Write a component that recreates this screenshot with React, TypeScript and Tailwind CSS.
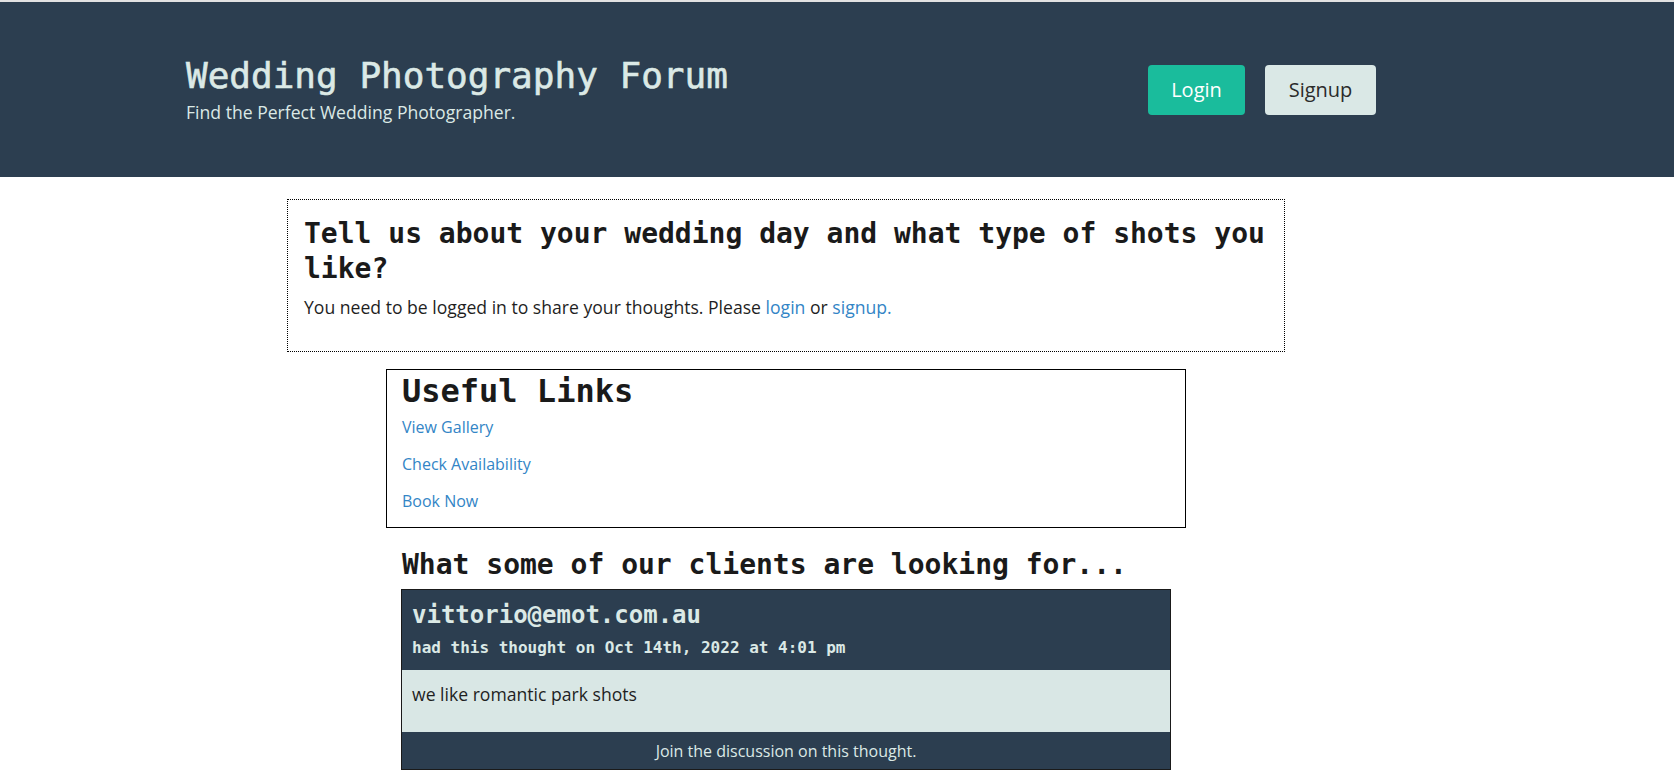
import React from "react";

const mono = "font-['DejaVu_Sans_Mono',monospace]";

export default function App() {
  return (
    <div className="min-h-[775px] bg-white font-['Open_Sans',sans-serif] text-[#1f1f1f]">
      <div className="h-[2px] bg-[#e2e2e2]" />
      <header className="h-[175px] bg-[#2c3e50] flex items-center">
        <div className="w-[1376px] pl-[186px] flex items-center justify-between">
          <div>
            <h1 className={`${mono} text-[36px] leading-[1.2] text-[#dbe9e6] [-webkit-text-stroke:0.6px_#dbe9e6]`}>
              Wedding Photography Forum
            </h1>
            <p className="mt-[1px] text-[17.6px] leading-[26px] text-[#dbe9e6]">
              Find the Perfect Wedding Photographer.
            </p>
          </div>
          <div className="flex items-center gap-[20px]">
            <button className="h-[50px] w-[97px] rounded-[4px] bg-[#1abc9c] text-white text-[20px]">
              Login
            </button>
            <button className="h-[50px] w-[111px] rounded-[4px] bg-[#dae8e6] text-[#2b2b2b] text-[20px]">
              Signup
            </button>
          </div>
        </div>
      </header>

      <main className="w-[1572px] flex flex-col items-center">
        <section className="mt-[22px] w-[998px] border border-dotted border-black px-[16px] pt-[16px] pb-[16px]">
          <h3 className={`${mono} font-bold text-[28px] leading-[35px] text-[#1a1a1a]`}>
            Tell us about your wedding day and what type of shots you like?
          </h3>
          <p className="mt-[8px] mb-[15px] text-[17.6px] leading-[26px]">
            You need to be logged in to share your thoughts. Please{" "}
            <a className="text-[#3385c6]" href="#">login</a> or{" "}
            <a className="text-[#3385c6]" href="#">signup.</a>
          </p>
        </section>

        <section className="mt-[17px] w-[800px] border border-black pl-[15px] pt-[2px] pb-[14px]">
          <h2 className={`${mono} font-bold text-[32px] leading-[1.2] text-[#1a1a1a]`}>
            Useful Links
          </h2>
          <div className="mt-[5px] flex flex-col gap-[13px] text-[16px] leading-[24px]">
            <a className="text-[#3385c6]" href="#">View Gallery</a>
            <a className="text-[#3385c6]" href="#">Check Availability</a>
            <a className="text-[#3385c6]" href="#">Book Now</a>
          </div>
        </section>

        <section className="mt-[19px] w-[770px]">
          <h3 className={`${mono} font-bold text-[28px] leading-[35px] text-[#1a1a1a] pl-[1px]`}>
            What some of our clients are looking for...
          </h3>
          <div className="mt-[7px] border border-[#1a1a1a]">
            <div className="bg-[#2c3e50] px-[10px] pt-[11px] pb-[10px] text-[#dbe9e6]">
              <div className={`${mono} font-bold text-[24px] leading-[1.2]`}>
                vittorio@emot.com.au
              </div>
              <div className={`${mono} font-bold text-[16px] leading-[24px] mt-[6px]`}>
                had this thought on Oct 14th, 2022 at 4:01 pm
              </div>
            </div>
            <div className="bg-[#d9e7e5] h-[62px] px-[10px] pt-[11px] text-[17.6px] leading-[26px]">
              we like romantic park shots
            </div>
            <div className="bg-[#2c3e50] pt-[7px] pb-[5px] text-center text-[16px] leading-[25px] text-[#dbe9e6]">
              Join the discussion on this thought.
            </div>
          </div>
        </section>
      </main>
    </div>
  );
}
